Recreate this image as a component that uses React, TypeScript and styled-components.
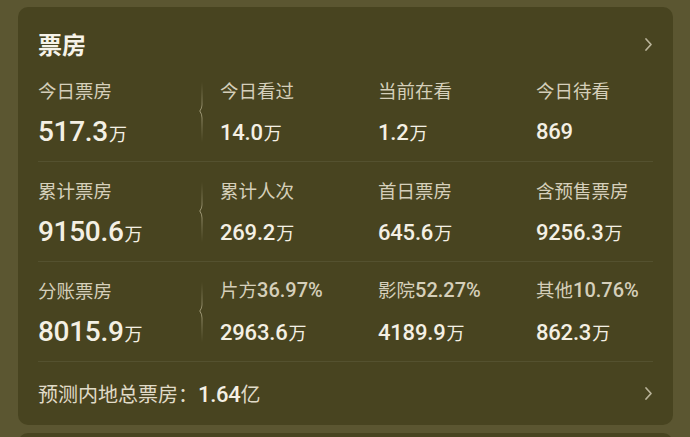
import React from 'react';
import styled, { createGlobalStyle } from 'styled-components';

const GlobalStyle = createGlobalStyle`
  html, body {
    margin: 0;
    padding: 0;
    background: #5b5631;
  }
  body {
    font-family: Roboto, "Noto Sans CJK SC", sans-serif;
  }
`;

const Page = styled.div`
  padding: 7px 17px 0 18px;
  display: flex;
  flex-direction: column;
  gap: 8px;
`;

const Card = styled.section`
  background: #484420;
  border-radius: 10px;
  padding: 0 20px;
`;

const Header = styled.div`
  display: flex;
  align-items: center;
  justify-content: space-between;
  height: 30px;
  padding: 22px 0 3px;
`;

const Title = styled.h2`
  margin: 0;
  font-family: "Noto Sans CJK SC", sans-serif;
  font-size: 24px;
  font-weight: 700;
  color: #f6f3e9;
  line-height: 30px;
`;

const Section = styled.div`
  display: grid;
  grid-template-columns: 182px 158px 158px 1fr;
  height: 100px;
  border-bottom: 1px solid rgba(255, 255, 255, 0.07);
  box-sizing: border-box;
`;

const Cell = styled.div<{ $lead?: boolean }>`
  display: flex;
  align-items: center;
  padding-right: ${p => (p.$lead ? '14px' : '0')};
`;

const Stat = styled.div`
  flex: 1;
  display: flex;
  flex-direction: column;
  gap: 15px;
  padding-top: 2px;
`;

const Label = styled.div`
  font-family: "Noto Sans CJK SC", sans-serif;
  font-size: 18.5px;
  line-height: 24px;
  color: #d5cfba;
  white-space: nowrap;
`;

const Pct = styled.span`
  font-family: Roboto, sans-serif;
  font-weight: 500;
  font-size: 20px;
`;

const Value = styled.div<{ $big?: boolean }>`
  font-family: Roboto, sans-serif;
  font-size: ${p => (p.$big ? '28px' : '22px')};
  font-weight: 500;
  line-height: 30px;
  color: #f4f0e4;
  white-space: nowrap;
  letter-spacing: ${p => (p.$big ? '-0.3px' : '-0.2px')};
`;

const Unit = styled.span`
  font-family: "Noto Sans CJK SC", sans-serif;
  font-size: 18px;
  font-weight: 400;
  margin-left: 1px;
`;

const Footer = styled.div`
  display: flex;
  align-items: center;
  justify-content: space-between;
  height: 63px;
`;

const FooterText = styled.div`
  font-family: "Noto Sans CJK SC", sans-serif;
  font-size: 20px;
  color: #e0dbc8;
  white-space: nowrap;
`;

const FooterNum = styled.span`
  font-family: Roboto, sans-serif;
  font-weight: 500;
  font-size: 22px;
  color: #f4f0e4;
  letter-spacing: -0.3px;
`;

const NextCard = styled(Card)`
  height: 40px;
`;

const Chevron = () => (
  <svg width="9" height="15" viewBox="0 0 9 15">
    <polyline points="2,2 7,7.5 2,13" fill="none" stroke="#b9b399" strokeWidth="1.7" strokeLinecap="round" strokeLinejoin="round" />
  </svg>
);

const Bracket = () => (
  <svg width="8" height="60" viewBox="0 0 8 60">
    <defs>
      <linearGradient id="bk" x1="0" y1="0" x2="0" y2="1">
        <stop offset="0" stopColor="#b7b08e" stopOpacity="0" />
        <stop offset="0.5" stopColor="#b7b08e" stopOpacity="0.8" />
        <stop offset="1" stopColor="#b7b08e" stopOpacity="0" />
      </linearGradient>
    </defs>
    <path d="M4 0 V23 Q4 26 1.8 29 Q4 32 4 36 V60" fill="none" stroke="url(#bk)" strokeWidth="1" />
  </svg>
);

type Item = { label: React.ReactNode; num: string; unit?: string };

const rows: Item[][] = [
  [
    { label: '今日票房', num: '517.3', unit: '万' },
    { label: '今日看过', num: '14.0', unit: '万' },
    { label: '当前在看', num: '1.2', unit: '万' },
    { label: '今日待看', num: '869' },
  ],
  [
    { label: '累计票房', num: '9150.6', unit: '万' },
    { label: '累计人次', num: '269.2', unit: '万' },
    { label: '首日票房', num: '645.6', unit: '万' },
    { label: '含预售票房', num: '9256.3', unit: '万' },
  ],
  [
    { label: '分账票房', num: '8015.9', unit: '万' },
    { label: <>片方<Pct>36.97%</Pct></>, num: '2963.6', unit: '万' },
    { label: <>影院<Pct>52.27%</Pct></>, num: '4189.9', unit: '万' },
    { label: <>其他<Pct>10.76%</Pct></>, num: '862.3', unit: '万' },
  ],
];

export default function App() {
  return (
    <>
      <GlobalStyle />
      <Page>
        <Card>
          <Header>
            <Title>票房</Title>
            <Chevron />
          </Header>
          {rows.map((row, r) => (
            <Section key={r}>
              {row.map((it, i) => (
                <Cell key={i} $lead={i === 0}>
                  <Stat>
                    <Label>{it.label}</Label>
                    <Value $big={i === 0}>
                      {it.num}
                      {it.unit && <Unit>{it.unit}</Unit>}
                    </Value>
                  </Stat>
                  {i === 0 && <Bracket />}
                </Cell>
              ))}
            </Section>
          ))}
          <Footer>
            <FooterText>
              预测内地总票房：<FooterNum>1.64</FooterNum>亿
            </FooterText>
            <Chevron />
          </Footer>
        </Card>
        <NextCard />
      </Page>
    </>
  );
}
